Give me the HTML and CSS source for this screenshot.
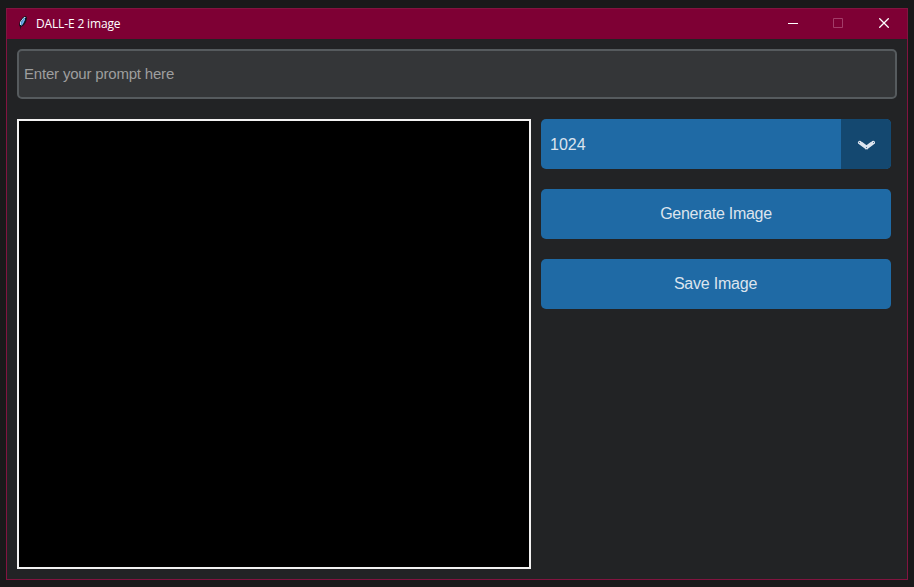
FILE: index.html
```html
<!DOCTYPE html>
<html lang="en">
<head>
<meta charset="utf-8">
<title>DALL-E 2 image</title>
<link rel="stylesheet" href="styles.css">
</head>
<body>
<div class="window">
  <header class="titlebar">
    <svg class="feather" width="10" height="16" viewBox="0 0 10 16">
      <path d="M2 15V12L1 10L2 6L5 2L8 1L9 3L8 7L6 10L3 12Z" fill="#10131c"/>
      <path d="M3 10V7L6 3L7 2V5L5 9Z" fill="#4f94dc"/>
      <path d="M2.5 10V7L6 2.5H7.5" fill="none" stroke="#bcdcf2"/>
      <path d="M6.5 4L3.5 10.5" fill="none" stroke="#78b5ed"/>
    </svg>
    <span class="title">DALL-E 2 image</span>
    <div class="controls">
      <svg width="10" height="10" viewBox="0 0 10 10"><path d="M0 5.5H10" stroke="#fff"/></svg>
      <svg width="10" height="10" viewBox="0 0 10 10"><path d="M.5 .5H9.5V9.5H.5Z" fill="none" stroke="#a33c68"/></svg>
      <svg class="close" width="10" height="10" viewBox="0 0 10 10"><path d="M.3 .3L9.7 9.7M9.7 .3L.3 9.7" stroke="#fff" stroke-width="1.3"/></svg>
    </div>
  </header>
  <main class="content">
    <input class="prompt" type="text" placeholder="Enter your prompt here">
    <div class="workspace">
      <div class="canvas"></div>
      <div class="actions">
        <div class="select">
          <span class="value">1024</span>
          <span class="arrow">
            <svg width="18" height="10" viewBox="0 0 18 10"><path d="M2.8 2.6L9.5 7.6L16.2 2.6" fill="none" stroke="#dce4ee" stroke-width="3.7" stroke-linecap="round" stroke-linejoin="round"/><path d="M2 2h1v1H2zM4 1h1v1H4zM14 1h1v1h-1zM16 2h1v1h-1zM9 7h1v1H9zM8 9h3v1H8z" fill="#527797"/></svg>
          </span>
        </div>
        <button class="button generate">Generate Image</button>
        <button class="button save">Save Image</button>
      </div>
    </div>
  </main>
</div>
</body>
</html>
```
FILE: styles.css
```css
* { box-sizing: border-box; }
body {
  margin: 0;
  height: 587px;
  padding: 8px 6px 7px;
  background: #19191a;
  font-family: "Liberation Sans", Arial, sans-serif;
  overflow: hidden;
}
.window {
  width: 902px;
  height: 572px;
  border: 1px solid #821440;
  background: #222325;
}
.titlebar {
  height: 30px;
  display: flex;
  align-items: center;
  padding-left: 11px;
  background: #7e0034;
}
.feather { margin-top: -2px; }
.title {
  margin: -2px 0 0 8px;
  font: 12px "Open Sans", "Noto Sans", sans-serif;
  letter-spacing: -0.15px;
  color: #fff;
}
.controls {
  margin-left: auto;
  padding: 0 18px 2px 0;
  display: flex;
  gap: 35px;
}
.controls svg { display: block; }
.controls .close { margin-left: 1px; }
.content { padding: 10px; }
.prompt {
  display: block;
  width: 880px;
  height: 50px;
  padding: 0 5px 2px;
  border: 2px solid #565b5e;
  border-radius: 5px;
  background: #343638;
  font: 15px "Liberation Sans", Arial, sans-serif;
  letter-spacing: -0.19px;
  color: #dce4ee;
  outline: none;
}
.prompt::placeholder { color: #9e9e9e; opacity: 1; }
.workspace {
  display: flex;
  gap: 10px;
  margin-top: 20px;
}
.canvas {
  width: 514px;
  height: 450px;
  border: 2px solid #f3f2f2;
  background: #000;
}
.actions {
  width: 350px;
  display: flex;
  flex-direction: column;
  gap: 20px;
}
.select, .button {
  height: 50px;
  border: 0;
  border-radius: 5px;
  background: #1f6aa5;
  color: #dce4ee;
  font: 16px "Liberation Sans", Arial, sans-serif;
}
.select {
  display: flex;
  align-items: center;
  overflow: hidden;
}
.value { flex: 1; padding: 2px 0 0 9px; }
.arrow {
  width: 50px;
  height: 50px;
  padding-top: 2px;
  display: flex;
  align-items: center;
  justify-content: center;
  background: #144870;
}
.button { padding: 0 0 1px; }
.generate { letter-spacing: -0.28px; }
.save { padding-right: 1px; letter-spacing: -0.22px; }
```
